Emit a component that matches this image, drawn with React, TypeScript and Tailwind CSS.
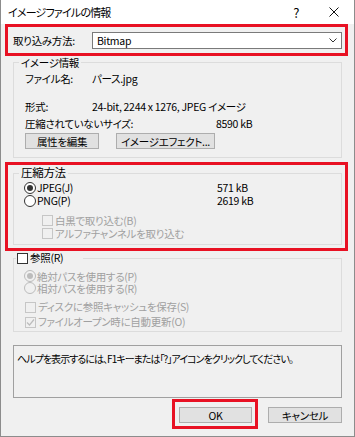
import React from "react";

const RED = "border-[#e81123]";

function Radio({ checked, disabled, label }: { checked?: boolean; disabled?: boolean; label: string }) {
  return (
    <div className="flex items-center">
      <span
        className={`flex h-[12px] w-[12px] shrink-0 items-center justify-center rounded-full border ${
          disabled ? "border-[#bcbcbc] bg-[#f0f0f0]" : "border-[#333333] bg-white"
        }`}
      >
        {checked && <span className={`h-[6px] w-[6px] rounded-full ${disabled ? "bg-[#bcbcbc]" : "bg-[#333333]"}`} />}
      </span>
      <span className={`ml-[1px] leading-[11px] ${disabled ? "text-[#a0a0a0]" : "text-black"}`}>{label}</span>
    </div>
  );
}

function Check({ checked, disabled, label }: { checked?: boolean; disabled?: boolean; label: string }) {
  return (
    <div className="flex items-center">
      <span
        className={`flex h-[11px] w-[11px] shrink-0 items-center justify-center border ${
          disabled ? "border-[#c6c6c6] bg-[#f0f0f0]" : "border-[#333333] bg-white"
        }`}
      >
        {checked && (
          <svg width="9" height="9" viewBox="0 0 9 9">
            <path d="M1 4.5 L3.5 7 L8 1.5" fill="none" stroke={disabled ? "#bcbcbc" : "#333"} strokeWidth="1.2" />
          </svg>
        )}
      </span>
      <span className={`ml-[2px] leading-[12px] ${disabled ? "text-[#a0a0a0]" : "text-black"}`}>{label}</span>
    </div>
  );
}

function Button({ children, className = "" }: { children: React.ReactNode; className?: string }) {
  return (
    <div
      className={`flex h-[16px] items-center justify-center border border-[#adadad] bg-[#e1e1e1] text-black ${className}`}
    >
      {children}
    </div>
  );
}

export default function App() {
  return (
    <div className="relative h-[437px] w-[355px] bg-[#f0f0f0] font-['Noto_Sans_CJK_JP',sans-serif] text-[10.5px] leading-[13px] tracking-[-0.3px] text-black shadow-[inset_1px_0_0_#8c8c8c,inset_-1px_0_0_#8c8c8c,inset_0_-1px_0_#8c8c8c] [font-feature-settings:'palt']">
      {/* title bar */}
      <div className="ml-[1px] mr-[1px] flex h-[24px] items-center bg-white pl-[7px] pr-[15px]">
        <span className="text-[11px] tracking-[-0.8px]">イメージファイルの情報</span>
        <span className="ml-auto text-[13px]">?</span>
        <svg className="ml-[30px]" width="10" height="10" viewBox="0 0 10 10">
          <path d="M0.5 0.5 L9.5 9.5 M9.5 0.5 L0.5 9.5" stroke="#111" strokeWidth="1" />
        </svg>
      </div>

      {/* import method */}
      <div className={`ml-[5px] flex h-[32px] w-[343px] items-center border-[3px] ${RED} pl-[5px] pr-[3px]`}>
        <span>取り込み方法:</span>
        <div className="ml-auto flex h-[17px] w-[250px] items-center border border-[#7a7a7a] bg-white pl-[4px] pr-[4px]">
          <span>Bitmap</span>
          <svg className="ml-auto" width="8" height="5" viewBox="0 0 8 5">
            <path d="M0.5 0.5 L4 4 L7.5 0.5" fill="none" stroke="#333" strokeWidth="1" />
          </svg>
        </div>
      </div>

      {/* image info */}
      <div className="relative ml-[13px] mt-[6px] h-[96px] w-[329px] border border-[#dcdcdc] pl-[11px] pt-[7px]">
        <span className="absolute -top-[7px] left-[5px] bg-[#f0f0f0] px-[2px]">イメージ情報</span>
        <div className="flex h-[17px] items-center">
          <span className="w-[67px]">ファイル名:</span>
          <span>パース.jpg</span>
        </div>
        <div className="mt-[11px] flex h-[17px] items-center">
          <span className="w-[67px]">形式:</span>
          <span>24-bit, 2244 x 1276, JPEG イメージ</span>
        </div>
        <div className="flex h-[17px] items-center">
          <span className="w-[191px]">圧縮されていないサイズ:</span>
          <span>8590 kB</span>
        </div>
        <div className="mt-[1px] flex gap-[17px]">
          <Button className="w-[74px]">属性を編集</Button>
          <Button className="w-[99px]">イメージエフェクト...</Button>
        </div>
      </div>

      {/* compression */}
      <div className={`ml-[5px] mt-[4px] h-[89px] w-[343px] border-[3px] ${RED} pl-[5px] pt-[8px]`}>
        <div className="relative h-[72px] w-[329px] border border-[#dcdcdc] pl-[10px] pt-[7px]">
          <span className="absolute -top-[8px] left-[5px] bg-[#f0f0f0] px-[2px] text-[11.5px]">圧縮方法</span>
          <div className="flex h-[13px] items-center">
            <div className="w-[193px]">
              <Radio checked label="JPEG(J)" />
            </div>
            <span className="leading-[11px]">571 kB</span>
          </div>
          <div className="flex h-[13px] items-center">
            <div className="w-[193px]">
              <Radio label="PNG(P)" />
            </div>
            <span className="leading-[11px]">2619 kB</span>
          </div>
          <div className="ml-[18px] mt-[7px] flex h-[13px] items-center">
            <Check disabled label="白黒で取り込む(B)" />
          </div>
          <div className="ml-[18px] flex h-[13px] items-center">
            <Check disabled label="アルファチャンネルを取り込む" />
          </div>
        </div>
      </div>

      {/* reference */}
      <div className="relative ml-[13px] mt-[7px] h-[74px] w-[329px] border border-[#dcdcdc] pl-[10px] pt-[11px]">
        <div className="absolute -top-[8px] left-[2px] flex h-[14px] items-center bg-[#f0f0f0] pl-[1px] pr-[20px]">
          <Check label="参照(R)" />
        </div>
        <div className="flex h-[12px] items-center">
          <Radio checked disabled label="絶対パスを使用する(P)" />
        </div>
        <div className="flex h-[12px] items-center">
          <Radio disabled label="相対パスを使用する(R)" />
        </div>
        <div className="ml-[1px] mt-[6px] flex flex-col gap-[1px]">
          <div className="flex h-[14px] items-center">
            <Check disabled label="ディスクに参照キャッシュを保存(S)" />
          </div>
          <div className="flex h-[14px] items-center">
            <Check checked disabled label="ファイルオープン時に自動更新(O)" />
          </div>
        </div>
      </div>

      {/* help */}
      <div className="ml-[13px] mt-[13px] h-[53px] w-[329px] border border-[#a0a0a0] pl-[3px] pt-[6px] text-[10px] tracking-[-0.95px]">
        ヘルプを表示するには、F1キーまたは「?」アイコンをクリックしてください。
      </div>

      {/* buttons */}
      <div className="mt-[1px] flex items-start justify-end pr-[13px]">
        <div className={`h-[30px] w-[86px] border-[3px] ${RED} pl-[4px] pt-[5px]`}>
          <Button className="w-[73px] border-[#0078d7]">OK</Button>
        </div>
        <Button className="ml-[10px] mt-[8px] w-[74px]">キャンセル</Button>
      </div>
    </div>
  );
}
